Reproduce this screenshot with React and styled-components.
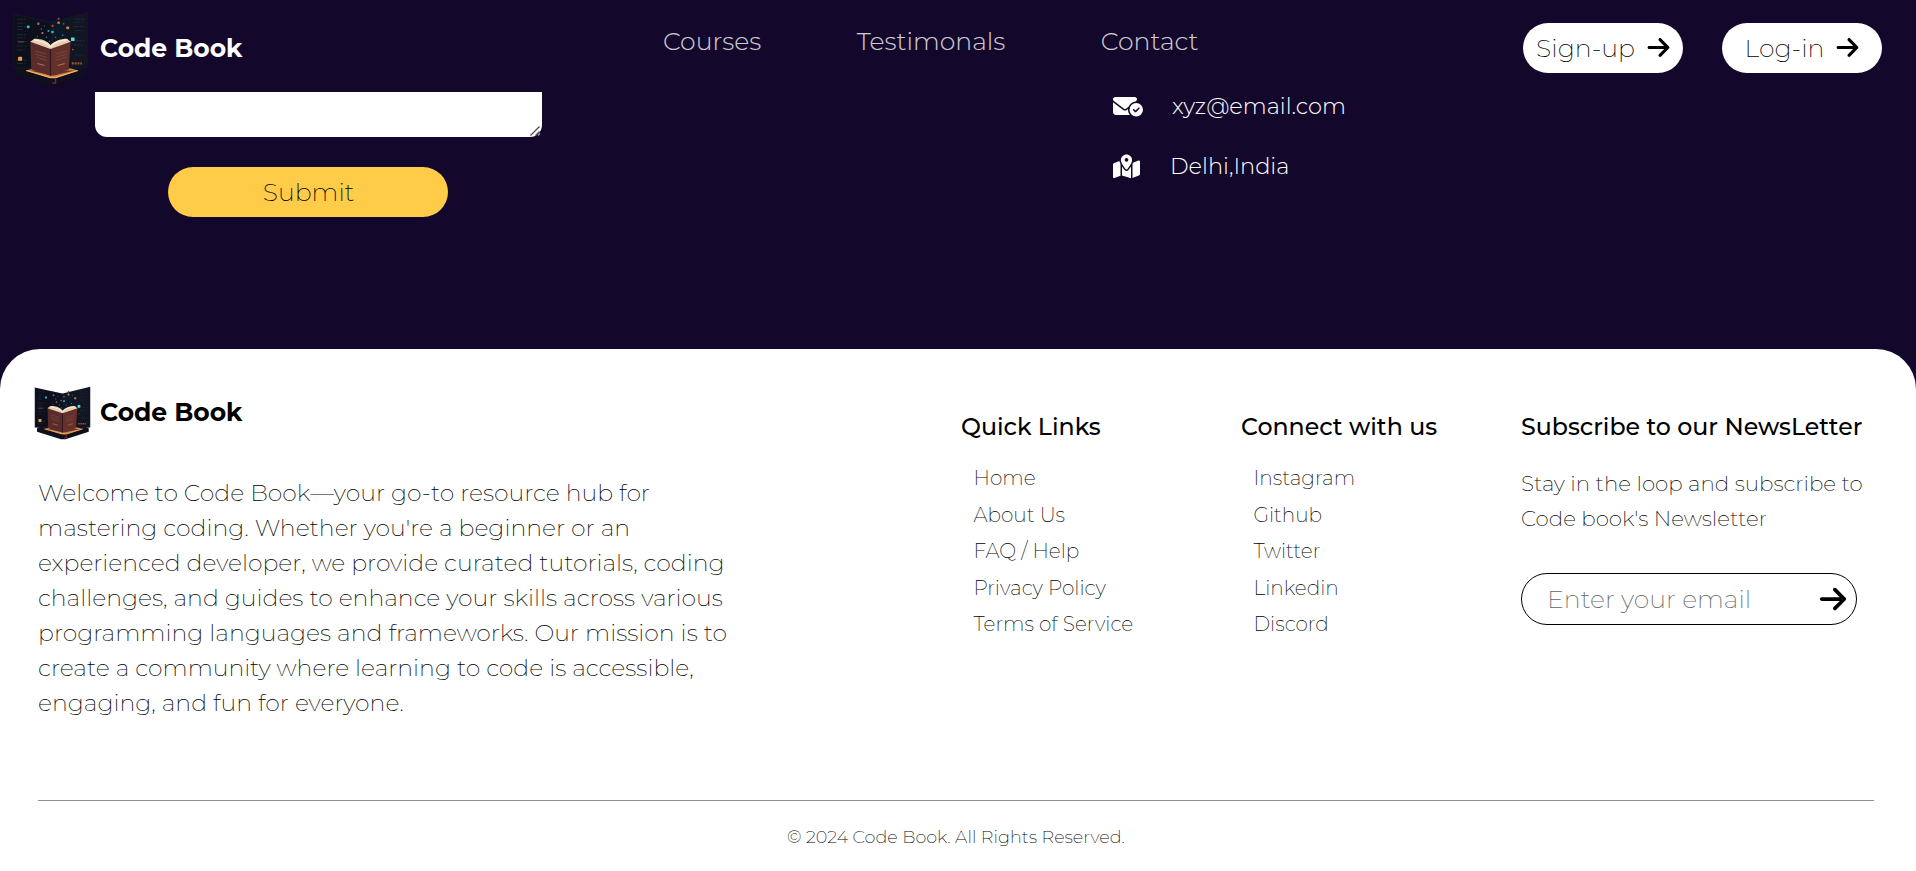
import React from "react";
import styled, { createGlobalStyle } from "styled-components";
import { FaArrowRight, FaEnvelopeCircleCheck, FaMapLocationDot } from "react-icons/fa6";

const GlobalStyle = createGlobalStyle`
  *, *::before, *::after { box-sizing: border-box; }
  body {
    margin: 0;
    background: #13072b;
    color: #000;
    font-family: Montserrat, Inter, sans-serif;
    font-weight: 230;
  }
  svg { display: block; flex: none; }
`;

const Page = styled.div`
  height: 871px;
  overflow: hidden;
  display: flex;
  flex-direction: column;
`;

const Header = styled.header`
  flex: none;
  height: 92px;
  display: flex;
  align-items: flex-start;
  padding-left: 12px;
  color: #fff;
`;

const HeaderBrand = styled.div`
  width: 651px;
  padding-top: 11px;
  display: flex;
  align-items: flex-start;
  gap: 11px;
`;

const BrandName = styled.span`
  font-size: 25px;
  font-weight: 700;
  line-height: 30px;
  white-space: nowrap;
  padding-top: ${(p) => p.$drop}px;
`;

const Nav = styled.nav`
  width: 860px;
  display: flex;
  gap: 95.5px;
  padding-top: 26px;
`;

const NavLink = styled.a`
  font-size: 25.1px;
  font-weight: 300;
  line-height: 30px;
  color: #fff;
  opacity: 0.8;
`;

const Actions = styled.div`
  display: flex;
  gap: 39px;
  padding-top: 23px;
`;

const PillButton = styled.button`
  width: ${(p) => p.$width}px;
  height: 50px;
  padding: 0 0 1px 1px;
  border: 0;
  border-radius: 25px;
  display: flex;
  align-items: center;
  justify-content: center;
  gap: 11px;
  background: ${(p) => p.$background || "#fff"};
  color: #000;
  font: inherit;
  font-size: 25.2px;
`;

const Contact = styled.section`
  flex: none;
  height: 257px;
  display: flex;
  padding-left: 95px;
`;

const Form = styled.form`
  width: 1018px;
  display: flex;
  flex-direction: column;
  align-items: flex-start;
  gap: 30px;
`;

const MessageBox = styled.div`
  position: relative;
  width: 447px;
  height: 45px;
`;

const Message = styled.textarea`
  display: block;
  width: 100%;
  height: 100%;
  border: 0;
  border-radius: 0 0 12px 12px;
  background: #fff;
  resize: none;
  outline: none;
`;

const ResizeGrip = styled.svg`
  position: absolute;
  right: 1px;
  bottom: 0;
`;

const SubmitRow = styled.div`
  padding-left: 73px;
`;

const Details = styled.div`
  display: flex;
  flex-direction: column;
  gap: 30px;
  color: #fff;
`;

const Detail = styled.div`
  height: 30px;
  display: flex;
  align-items: center;
  gap: ${(p) => p.$gap}px;
  font-size: 22.5px;
  font-weight: 300;

  span { padding-bottom: 2px; }
  svg { margin-top: -2px; }
`;

const Footer = styled.footer`
  flex: 1;
  background: #fff;
  border-radius: 40px 40px 0 0;
  padding: 37px 42px 0 38px;
`;

const FooterMain = styled.div`
  height: 414px;
  display: flex;
`;

const About = styled.div`
  flex: none;
  width: 923px;
`;

const FooterBrand = styled.div`
  display: flex;
  align-items: flex-start;
  gap: 9px;
  margin-left: -4px;
  height: 89px;
`;

const AboutText = styled.p`
  width: 700px;
  margin: 0;
  font-size: 23.6px;
  line-height: 35px;
`;

const Column = styled.div`
  flex: none;
  width: ${(p) => p.$width}px;
  padding-top: 26px;
`;

const Heading = styled.h2`
  margin: 0;
  font-size: 23.7px;
  font-weight: 540;
  line-height: 30px;
  white-space: nowrap;
`;

const LinkList = styled.ul`
  list-style: none;
  margin: 18px 0 0;
  padding: 0 0 0 12.5px;
`;

const LinkItem = styled.li`
  font-size: 20.1px;
  line-height: 36.5px;
`;

const Note = styled.p`
  margin: 24px 0 0;
  font-size: 21.45px;
  line-height: 35px;
`;

const EmailField = styled.div`
  margin-top: 37px;
  width: 336px;
  height: 52px;
  border: 1px solid #000;
  border-radius: 26px;
  display: flex;
  align-items: center;
  justify-content: space-between;
  padding: 0 8px 0 25px;
`;

const EmailInput = styled.input`
  width: 240px;
  padding: 0;
  border: 0;
  outline: none;
  background: transparent;
  font: inherit;
  font-size: 25.2px;
  &::placeholder { color: #666; opacity: 1; }
`;

const Copyright = styled.div`
  border-top: 1px solid #8f8f8f;
  padding-top: 24px;
  text-align: center;
  font-size: 17.65px;
  line-height: 24px;
  color: #000;
`;

const sparks = [
  [16, 15, "#37bcd8", 2.6], [26, 12, "#b94c60", 2.4], [30, 21, "#c0604d", 2], [40, 14, "#a84c66", 2],
  [46, 11, "#cc784b", 2.4], [46, 7, "#8b533c", 2], [55, 16, "#dc8540", 2.6], [36, 19, "#3d8fae", 2],
  [40, 20, "#35b3ce", 2.4], [29, 17, "#3b6c8c", 1.6], [51, 12, "#3d7691", 1.5], [34, 25, "#2e7597", 1.6],
  [43, 25, "#7e5061", 1.6], [25, 24, "#315d82", 1.5], [50, 23, "#397d99", 1.5], [37, 29, "#2b7da2", 1.5],
  [60, 27, "#51e0e2", 3.6], [8, 46, "#e9a04c", 4], [32, 14, "#2b5474", 1.5], [60, 37, "#ad553b", 1.6],
];

function BookLogo({ width, height }) {
  return (
    <svg width={width} height={height} viewBox="0 0 76 73" preserveAspectRatio="none" aria-hidden="true">
      <path d="M4 57 L15 53 H61 L73 57 V62 L42 72 H36 L4 62Z" fill="#10101d" />
      <path d="M1 2 L38 10 L75 1 V56 L60 57 H16 L1 56Z" fill="#111622" />
      <path d="M2 4 L38 12 V55 L2 55Z" fill="#0c101d" />
      <path d="M38 11 L55 8 V55 H38Z" fill="#0c1825" />
      <g stroke="#1d2735" strokeWidth="1" strokeDasharray="6 1 4 2">
        <path d="M5 8H14M5 12H13M5 15H14M5 18H12M5 23H14M5 26H13M5 30H15M5 34H14M5 38H13M4 48H14M5 51H13" />
        <path d="M61 8H72M61 11H70M60 15H72M62 19H70M63 29H72M61 33H70M62 43H71" />
      </g>
      <path d="M6 30H12" stroke="#693935" strokeWidth="1.3" />
      <path d="M59 51H69" stroke="#a64c32" strokeWidth="2.2" strokeDasharray="2 .8" />
      {sparks.map(([x, y, fill, size]) => (
        <rect key={`${x}-${y}`} x={x - size / 2} y={y + 0.5 - size / 2} width={size} height={size} rx=".7" fill={fill} />
      ))}
      <path d="M14 58 L21 56 H58 L65 58 L43 65 H37Z" fill="#d98a40" />
      <path d="M17 58 H62 L41 63Z" fill="#65362a" />
      <path d="M14 58 L38 65 H43 L65 58" fill="none" stroke="#f5bd70" strokeWidth="1" />
      <path d="M18 29 L38 36 V63 L19 57Z" fill="#592c2b" />
      <path d="M38 36 L58 29 L56 57 L38 63Z" fill="#63302c" />
      <path d="M38 36V63" stroke="#35191f" strokeWidth="1.3" />
      <path d="M18 30 L22 27 C29 27 35 29 38 33 C42 29 49 27 54 27 L58 30 L38 37Z" fill="#e6cfb2" />
      <path d="M22 28 C29 29 35 31 38 35 C42 30 48 28 55 28" fill="none" stroke="#fff1d8" strokeWidth="1.2" />
      <path d="M23 39L34 42M23 42L34 45M24 45L34 48M43 42L54 39M43 45L54 42M43 48L54 45" stroke="#7c483b" strokeWidth=".8" />
      <path d="M25 51L32 53M45 53L52 51" stroke="#b0704c" strokeWidth="1" />
      <path d="M43 66V70H40" fill="none" stroke="#68302b" strokeWidth="1.4" />
    </svg>
  );
}

const navLinks = ["Courses", "Testimonals", "Contact"];
const quickLinks = ["Home", "About Us", "FAQ / Help", "Privacy Policy", "Terms of Service"];
const socialLinks = ["Instagram", "Github", "Twitter", "Linkedin", "Discord"];

function FooterLinks({ title, links }) {
  return (
    <Column $width={280}>
      <Heading>{title}</Heading>
      <LinkList>
        {links.map((label) => <LinkItem key={label}>{label}</LinkItem>)}
      </LinkList>
    </Column>
  );
}

export default function App() {
  return (
    <Page>
      <GlobalStyle />
      <Header>
        <HeaderBrand>
          <BookLogo width={77} height={75} />
          <BrandName $drop={22}>Code Book</BrandName>
        </HeaderBrand>
        <Nav>
          {navLinks.map((label) => <NavLink key={label}>{label}</NavLink>)}
        </Nav>
        <Actions>
          <PillButton $width={160}>Sign-up<FaArrowRight size={25} /></PillButton>
          <PillButton $width={160}>Log-in<FaArrowRight size={25} /></PillButton>
        </Actions>
      </Header>
      <Contact>
        <Form>
          <MessageBox>
            <Message aria-label="Message" />
            <ResizeGrip width="12" height="12" viewBox="0 0 12 12" aria-hidden="true">
              <path d="M1.5 10.5L10.5 1.5M6.5 10.5L10.5 6.5" stroke="#4b4b4b" strokeWidth="1.3" />
              <path d="M9 10.5L11 8.5" stroke="#9a98a2" strokeWidth="1.3" />
            </ResizeGrip>
          </MessageBox>
          <SubmitRow>
            <PillButton type="button" $width={280} $background="#ffcc4a">Submit</PillButton>
          </SubmitRow>
        </Form>
        <Details>
          <Detail $gap={29}><FaEnvelopeCircleCheck size={30} /><span>xyz@email.com</span></Detail>
          <Detail $gap={30}><FaMapLocationDot size={27} /><span>Delhi,India</span></Detail>
        </Details>
      </Contact>
      <Footer>
        <FooterMain>
          <About>
            <FooterBrand>
              <BookLogo width={57} height={54} />
              <BrandName $drop={11}>Code Book</BrandName>
            </FooterBrand>
            <AboutText>
              Welcome to Code Book—your go-to resource hub for mastering coding. Whether you're a beginner or an
              experienced developer, we provide curated tutorials, coding challenges, and guides to enhance your
              skills across various programming languages and frameworks. Our mission is to create a community
              where learning to code is accessible, engaging, and fun for everyone.
            </AboutText>
          </About>
          <FooterLinks title="Quick Links" links={quickLinks} />
          <FooterLinks title="Connect with us" links={socialLinks} />
          <Column $width={353}>
            <Heading>Subscribe to our NewsLetter</Heading>
            <Note>Stay in the loop and subscribe to Code book's Newsletter</Note>
            <EmailField>
              <EmailInput placeholder="Enter your email" aria-label="Email" />
              <FaArrowRight size={30} />
            </EmailField>
          </Column>
        </FooterMain>
        <Copyright>© 2024 Code Book. All Rights Reserved.</Copyright>
      </Footer>
    </Page>
  );
}
